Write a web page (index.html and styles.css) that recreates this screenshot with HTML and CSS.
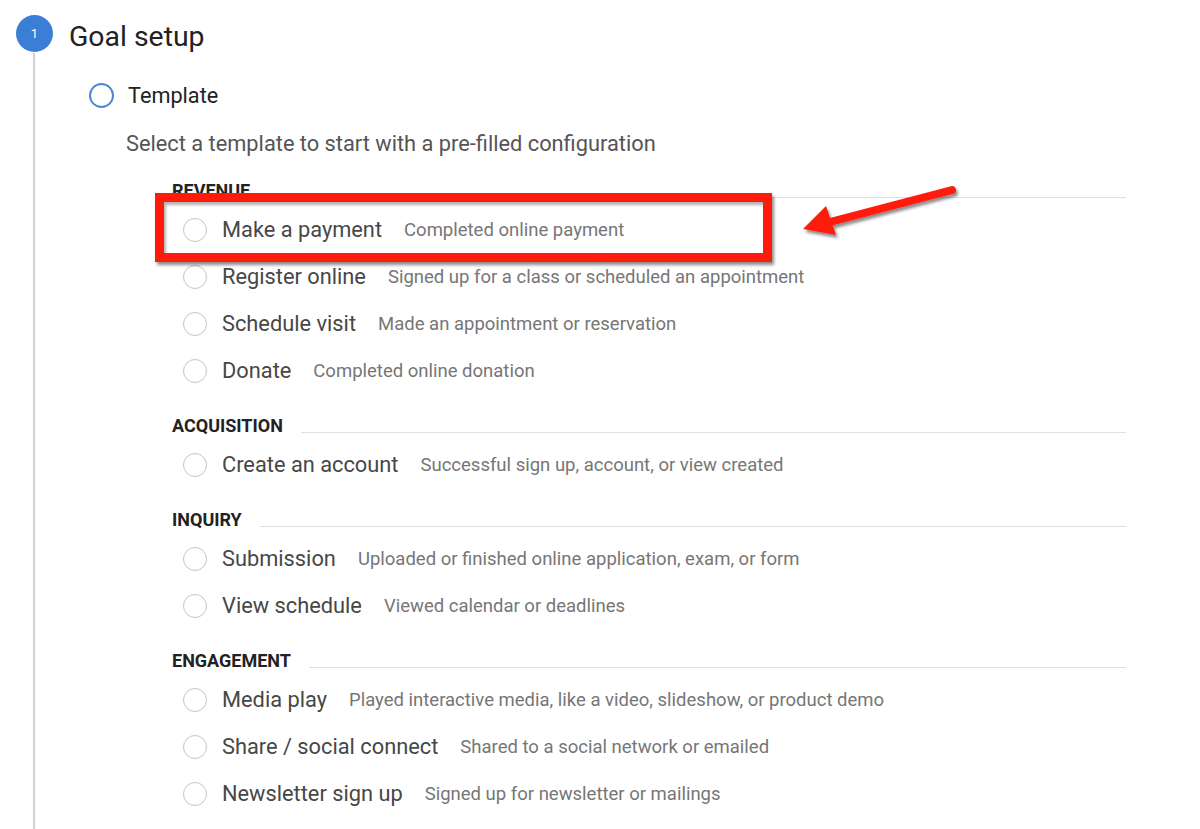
FILE: index.html
```html
<!DOCTYPE html>
<html lang="en">
<head>
<meta charset="utf-8">
<title>Goal setup</title>
<link rel="stylesheet" href="styles.css">
</head>
<body>
<div class="step">
  <div class="step-head">
    <span class="step-num">1</span>
    <h1 class="step-title">Goal setup</h1>
  </div>
  <div class="step-body">
    <div class="sub-head">
      <span class="sub-circle"></span>
      <h2 class="sub-title">Template</h2>
    </div>
    <p class="hint">Select a template to start with a pre-filled configuration</p>
    <div class="groups">
      <section class="group">
        <div class="group-head"><span class="group-name">REVENUE</span><span class="group-rule"></span></div>
        <div class="row"><span class="radio"></span><span class="label">Make a payment</span><span class="desc">Completed online payment</span></div>
        <div class="row"><span class="radio"></span><span class="label">Register online</span><span class="desc">Signed up for a class or scheduled an appointment</span></div>
        <div class="row"><span class="radio"></span><span class="label">Schedule visit</span><span class="desc">Made an appointment or reservation</span></div>
        <div class="row"><span class="radio"></span><span class="label">Donate</span><span class="desc">Completed online donation</span></div>
      </section>
      <section class="group">
        <div class="group-head"><span class="group-name">ACQUISITION</span><span class="group-rule"></span></div>
        <div class="row"><span class="radio"></span><span class="label">Create an account</span><span class="desc">Successful sign up, account, or view created</span></div>
      </section>
      <section class="group">
        <div class="group-head"><span class="group-name">INQUIRY</span><span class="group-rule"></span></div>
        <div class="row"><span class="radio"></span><span class="label">Submission</span><span class="desc">Uploaded or finished online application, exam, or form</span></div>
        <div class="row"><span class="radio"></span><span class="label">View schedule</span><span class="desc">Viewed calendar or deadlines</span></div>
      </section>
      <section class="group">
        <div class="group-head"><span class="group-name">ENGAGEMENT</span><span class="group-rule"></span></div>
        <div class="row"><span class="radio"></span><span class="label">Media play</span><span class="desc">Played interactive media, like a video, slideshow, or product demo</span></div>
        <div class="row"><span class="radio"></span><span class="label">Share / social connect</span><span class="desc">Shared to a social network or emailed</span></div>
        <div class="row"><span class="radio"></span><span class="label">Newsletter sign up</span><span class="desc">Signed up for newsletter or mailings</span></div>
      </section>
    </div>
  </div>
</div>

<div class="highlight-box"></div>
<svg class="arrow" width="200" height="80" viewBox="780 170 200 80" xmlns="http://www.w3.org/2000/svg">
  <defs>
    <filter id="sh" x="-20%" y="-50%" width="140%" height="200%">
      <feDropShadow dx="2" dy="3" stdDeviation="1.5" flood-color="#000" flood-opacity="0.45"/>
    </filter>
  </defs>
  <g filter="url(#sh)">
    <line x1="952" y1="190" x2="830" y2="222" stroke="#ff1a0a" stroke-width="8" stroke-linecap="round"/>
    <polygon points="803,229 826,206 836,235" fill="#ff1a0a"/>
  </g>
</svg>
</body>
</html>
```

FILE: styles.css
```css
html, body {
  margin: 0;
  padding: 0;
  background: #ffffff;
  overflow: hidden;
}

body {
  font-family: Roboto, "Liberation Sans", Arial, sans-serif;
  color: #212121;
  position: relative;
  width: 1200px;
  height: 829px;
}

.step {
  display: flex;
  flex-direction: column;
  min-height: 829px;
}

.step-head {
  display: flex;
  align-items: flex-start;
  height: 53px;
}

.step-num {
  width: 37px;
  height: 37px;
  margin: 15px 0 0 16px;
  border-radius: 50%;
  background: #3a7fd5;
  color: #ffffff;
  font-size: 13px;
  display: flex;
  align-items: center;
  justify-content: center;
  flex: none;
}

.step-title {
  margin: 19px 0 0 16px;
  font-size: 28.4px;
  font-weight: 400;
  line-height: 36px;
  color: #222222;
}

.step-body {
  flex: 1;
  margin-left: 33px;
  border-left: 2px solid #d3d3d3;
  padding-top: 30px;
}

.sub-head {
  display: flex;
  align-items: center;
  margin-left: 54px;
  height: 25px;
}

.sub-circle {
  width: 21px;
  height: 21px;
  border: 2px solid #4a88d8;
  border-radius: 50%;
  flex: none;
}

.sub-title {
  margin: 0 0 0 14px;
  font-size: 21.7px;
  font-weight: 400;
  color: #222222;
  line-height: 25px;
}

.hint {
  margin: 24px 0 0 91px;
  font-size: 21.8px;
  line-height: 24px;
  color: #555555;
}

.groups {
  margin: 23px 74px 0 137px;
  display: flex;
  flex-direction: column;
  gap: 20px;
}

.group-head {
  display: flex;
  height: 24px;
  margin-bottom: 3px;
}

.group-name {
  font-size: 18px;
  font-weight: 700;
  line-height: 24px;
  color: #222222;
}

.group-rule {
  flex: 1;
  height: 18px;
  margin-left: 18px;
  border-bottom: 1px solid #e0e0e0;
}

.row {
  display: flex;
  align-items: center;
  height: 47px;
  padding-left: 11px;
}

.radio {
  width: 22px;
  height: 22px;
  border: 1.5px solid #c4c4c4;
  border-radius: 50%;
  flex: none;
}

.label {
  margin-left: 15px;
  font-size: 21.8px;
  color: #474747;
}

.desc {
  margin-left: 22px;
  font-size: 18.5px;
  color: #767676;
}

.highlight-box {
  position: absolute;
  left: 155px;
  top: 193px;
  width: 599px;
  height: 51px;
  border: 9px solid #ff1a0a;
  box-shadow: 2px 3px 3px rgba(0, 0, 0, 0.45), inset 2px 3px 3px rgba(0, 0, 0, 0.3);
}

.arrow {
  position: absolute;
  left: 780px;
  top: 170px;
}
```
